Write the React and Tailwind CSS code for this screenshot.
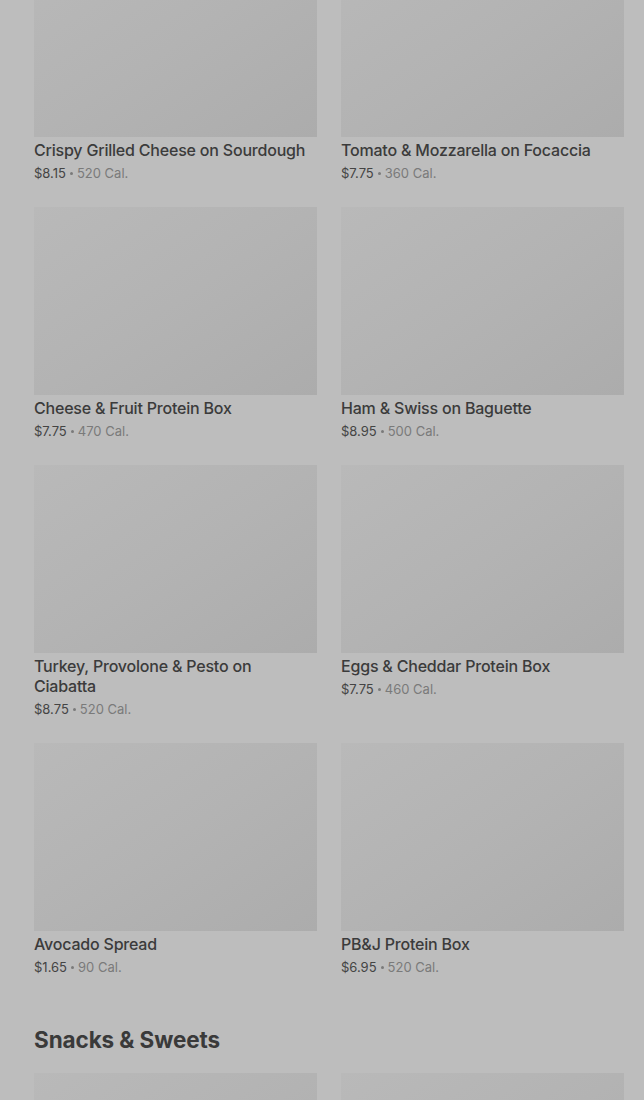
const items = [
  { name: "Crispy Grilled Cheese on Sourdough", price: "$8.15", cal: "520 Cal." },
  { name: "Tomato & Mozzarella on Focaccia", price: "$7.75", cal: "360 Cal." },
  { name: "Cheese & Fruit Protein Box", price: "$7.75", cal: "470 Cal." },
  { name: "Ham & Swiss on Baguette", price: "$8.95", cal: "500 Cal." },
  { name: "Turkey, Provolone & Pesto on Ciabatta", price: "$8.75", cal: "520 Cal." },
  { name: "Eggs & Cheddar Protein Box", price: "$7.75", cal: "460 Cal." },
  { name: "Avocado Spread", price: "$1.65", cal: "90 Cal." },
  { name: "PB&J Protein Box", price: "$6.95", cal: "520 Cal." },
]

const snacks = [
  { name: "Chocolate Chip Cookie", price: "$2.45", cal: "380 Cal." },
  { name: "Kettle Chips", price: "$1.95", cal: "220 Cal." },
]

function ItemCard({ item }) {
  return (
    <div className="flex flex-col">
      <div className="h-[188px] w-full bg-gradient-to-br from-[#b9b9b9] via-[#b3b3b3] to-[#acacac]" />
      <p className="mt-[3px] text-[16px] font-medium leading-[20px] tracking-[-0.2px] text-[#3b3b3b]">
        {item.name}
      </p>
      <p className="mt-[3px] flex items-center text-[13px] leading-[20px]">
        <span className="text-[#444444]">{item.price}</span>
        <span className="mx-[4px] inline-block h-[3px] w-[3px] rounded-full bg-[#7a7a7a]" />
        <span className="text-[#7a7a7a]">{item.cal}</span>
      </p>
    </div>
  )
}

export default function App() {
  return (
    <div
      className="min-h-[1100px] w-full overflow-hidden bg-[#bdbdbd]"
      style={{ fontFamily: "Inter, 'Noto Sans', sans-serif" }}
    >
      <div className="-mt-[51px] pl-[34px] pr-[20px]">
        <div className="grid grid-cols-2 gap-x-[24px] gap-y-[24px]">
          {items.map((item) => (
            <ItemCard key={item.name} item={item} />
          ))}
        </div>

        <h2 className="mt-[45px] text-[22.5px] font-bold leading-[36px] tracking-[-0.1px] text-[#3a3a3a]">
          Snacks &amp; Sweets
        </h2>

        <div className="mt-[15px] grid grid-cols-2 gap-x-[24px] gap-y-[24px]">
          {snacks.map((item) => (
            <ItemCard key={item.name} item={item} />
          ))}
        </div>
      </div>
    </div>
  )
}
